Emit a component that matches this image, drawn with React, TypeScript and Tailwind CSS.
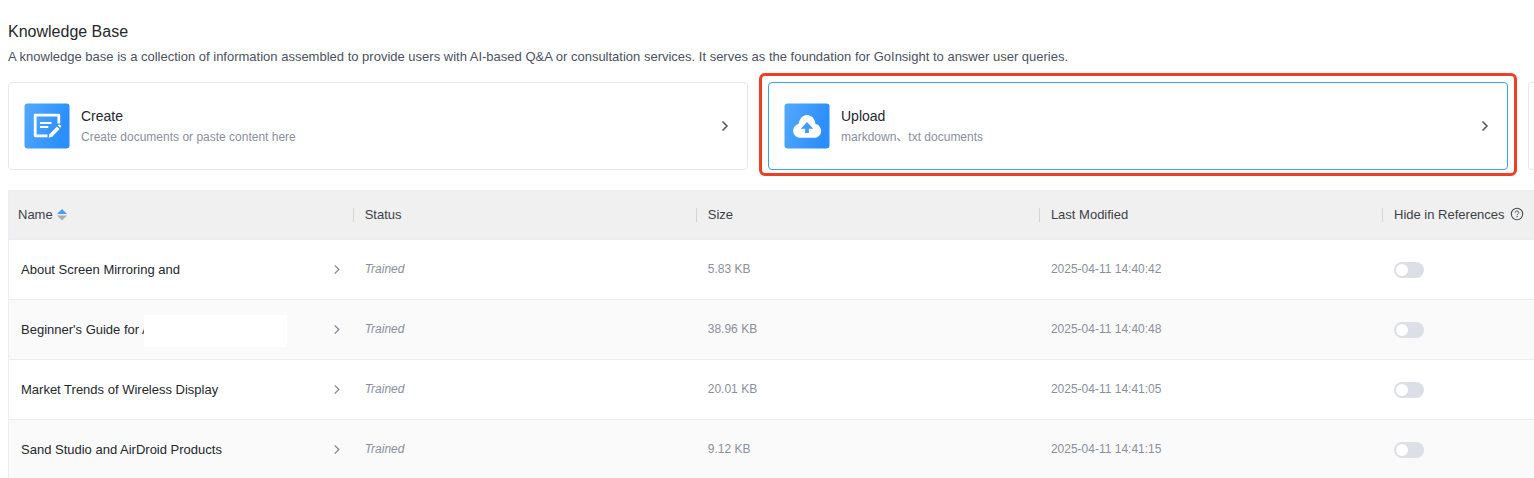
import { useState, type ReactNode } from "react";

interface KnowledgeDoc {
  name: string;
  redacted?: boolean;
  status: string;
  size: string;
  modified: string;
}

const docs: KnowledgeDoc[] = [
  { name: "About Screen Mirroring and", status: "Trained", size: "5.83 KB", modified: "2025-04-11 14:40:42" },
  { name: "Beginner's Guide for A", redacted: true, status: "Trained", size: "38.96 KB", modified: "2025-04-11 14:40:48" },
  { name: "Market Trends of Wireless Display", status: "Trained", size: "20.01 KB", modified: "2025-04-11 14:41:05" },
  { name: "Sand Studio and AirDroid Products", status: "Trained", size: "9.12 KB", modified: "2025-04-11 14:41:15" },
];

function ChevronIcon({ className }: { className: string }) {
  return (
    <svg viewBox="0 0 8 12" fill="none" stroke="currentColor" aria-hidden="true" className={className}>
      <path d="M1.5 1.5 6 6 1.5 10.5" strokeWidth="1.5" />
    </svg>
  );
}

function CreateIcon() {
  return (
    <svg viewBox="0 0 46 46" className="size-[46px] shrink-0" aria-hidden="true">
      <defs>
        <linearGradient id="create-bg" x1="0" y1="0" x2="1" y2="0.3">
          <stop offset="0" stopColor="#54a9ff" />
          <stop offset="1" stopColor="#2a8efc" />
        </linearGradient>
      </defs>
      <rect x="0.5" y="0.5" width="45" height="45" rx="3" fill="url(#create-bg)" />
      <path d="M34.8 20.5V12.2H11.2v20.6h12.3" fill="none" stroke="#fff" strokeWidth="2.8" strokeLinejoin="round" />
      <path d="M16 19.9h11.5M16 23.9h8.3" fill="none" stroke="#fff" strokeWidth="2" />
      <path d="m33 23.4 2.6 2.5-7.4 7.8-3.5 1 .7-3.5z" fill="#fff" />
      <path d="m33.8 22.5 1-1c.8-.5 2.9 1.2 2.3 2.3l-.9 1z" fill="#fff" />
    </svg>
  );
}

function UploadIcon() {
  return (
    <svg viewBox="0 0 46 46" className="size-[46px] shrink-0" aria-hidden="true">
      <defs>
        <linearGradient id="upload-bg" x1="0" y1="0" x2="1" y2="0.3">
          <stop offset="0" stopColor="#54a9ff" />
          <stop offset="1" stopColor="#2a8efc" />
        </linearGradient>
      </defs>
      <rect x="0.5" y="0.5" width="45" height="45" rx="3" fill="url(#upload-bg)" />
      <path
        d="M16.5 34.8C12.4 34.8 9.2 31.9 9.2 28c0-3.5 2.3-6.2 5.4-6.9C15.3 15.8 18.700 12 23 12c4.400 0 7.900 3.600 8.500 8.900 3.300.6 5.600 3.500 5.600 7 0 4-3.100 6.900-7.200 6.900z"
        fill="#fff"
      />
      <path d="m23 19 6.200 6.700h-4.300v4.200h-3.800v-4.200h-4.300z" fill="#3f9cfe" />
    </svg>
  );
}

function HelpIcon() {
  return (
    <svg viewBox="0 0 14 14" fill="none" stroke="#4b4d52" className="mb-[2px] size-[14px]" aria-hidden="true">
      <circle cx="7" cy="7" r="5.7" strokeWidth="1.1" />
      <path d="M5.200 5.700C5.200 4.500 6 3.900 7 3.900s1.800.7 1.800 1.600c0 1.200-1.700 1.300-1.700 2.600" strokeWidth="1" />
      <path d="M7.100 9.100v1.200" strokeWidth="1.1" />
    </svg>
  );
}

interface ActionCardProps {
  icon: ReactNode;
  title: string;
  description: string;
  active?: boolean;
}

function ActionCard({ icon, title, description, active }: ActionCardProps) {
  return (
    <button
      type="button"
      className={`flex h-[88px] w-full items-center rounded border bg-white pl-[15px] pr-[18px] text-left ${
        active ? "border-[#409eff]" : "border-[#e6e8eb]"
      }`}
    >
      {icon}
      <span className="ml-[11px] flex min-w-0 flex-1 flex-col">
        <span className="text-[14px] leading-[22px] text-[#25272d]">{title}</span>
        <span className="text-[12px] leading-[20px] text-[#8a8f9d]">{description}</span>
      </span>
      <ChevronIcon className="h-3 w-2 text-[#4f5566]" />
    </button>
  );
}

function HeaderCell({ children }: { children: ReactNode }) {
  return (
    <th scope="col" className="border-b border-[#ebeef5] p-0 font-normal">
      <div className="flex items-center">
        <span className="-ml-px mr-[11px] h-[14px] w-px bg-[#d3d5d9]" />
        {children}
      </div>
    </th>
  );
}

function DocRow({ doc }: { doc: KnowledgeDoc }) {
  const [hidden, setHidden] = useState(false);

  return (
    <tr className="h-[60px] text-[12px] text-[#8a8f9d] even:bg-[#fafafa]">
      <td className="border-b border-[#ebeef5] p-0 pl-3 pr-[13px]">
        <a href="#" className="flex items-center justify-between text-[13px] leading-5 text-[#25272d]">
          <span className="relative whitespace-nowrap">
            {doc.name}
            {doc.redacted && <span className="absolute -top-[5px] left-[123px] h-8 w-[143px] bg-white" />}
          </span>
          <ChevronIcon className="h-[11px] w-2 text-[#858b99]" />
        </a>
      </td>
      <td className="border-b border-[#ebeef5] p-0 pb-[2px] pl-[11px] italic">{doc.status}</td>
      <td className="border-b border-[#ebeef5] p-0 pb-[2px] pl-[11px]">{doc.size}</td>
      <td className="border-b border-[#ebeef5] p-0 pb-[2px] pl-[11px]">{doc.modified}</td>
      <td className="border-b border-[#ebeef5] p-0 pl-[11px]">
        <input
          type="checkbox"
          role="switch"
          aria-label={`Hide ${doc.name} in references`}
          checked={hidden}
          onChange={(e) => setHidden(e.target.checked)}
          className="flex h-4 w-[30px] cursor-pointer appearance-none items-center rounded-full bg-[#dcdfe6] px-[2px] before:size-3 before:rounded-full before:bg-white checked:justify-end checked:bg-[#409eff]"
        />
      </td>
    </tr>
  );
}

export default function App() {
  return (
    <main className="h-screen overflow-hidden bg-white pl-2 pt-5 font-['Liberation_Sans','Noto_Sans_CJK_SC',sans-serif]">
      <h1 className="text-[16px] leading-6 text-[#25272d]">Knowledge Base</h1>
      <p className="mt-[3px] text-[13px] leading-5 text-[#4b5162]">
        A knowledge base is a collection of information assembled to provide users with AI-based Q&amp;A or consultation
        services. It serves as the foundation for GoInsight to answer user queries.
      </p>

      {/* Ways to add documents, the third card is cut off by the window */}
      <div className="mt-[15px] grid grid-cols-[1fr_1fr_6px] gap-5">
        <ActionCard icon={<CreateIcon />} title="Create" description="Create documents or paste content here" />
        <div className="relative">
          <ActionCard icon={<UploadIcon />} title="Upload" description="markdown、txt documents" active />
          <div className="pointer-events-none absolute -inset-x-[9px] -bottom-[6px] -top-[9px] rounded-md border-3 border-[#ee3f24]" />
        </div>
        <div className="rounded-l border border-r-0 border-[#e6e8eb]" />
      </div>

      {/* Documents */}
      <div className="mt-5 border-l border-t border-[#ebeef5]">
        <table className="w-full table-fixed border-separate border-spacing-0 text-left">
          <colgroup>
            <col className="w-[22.6%]" />
            <col className="w-[22.5%]" />
            <col className="w-[22.5%]" />
            <col className="w-[22.5%]" />
            <col />
          </colgroup>
          <thead>
            <tr className="h-[49px] bg-[#f0f0f0] text-[13px] text-[#3c3f47]">
              <th scope="col" className="border-b border-[#ebeef5] p-0 pl-[9px] font-normal">
                <button type="button" className="flex items-center gap-[3px]">
                  Name
                  <svg viewBox="0 0 12 12" className="size-3" aria-hidden="true">
                    <path d="M6 0 11 5H1z" fill="#409eff" />
                    <path d="M6 11.500 1 6.500h10z" fill="#a8abb2" />
                  </svg>
                </button>
              </th>
              <HeaderCell>Status</HeaderCell>
              <HeaderCell>Size</HeaderCell>
              <HeaderCell>Last Modified</HeaderCell>
              <HeaderCell>
                <span className="mr-[5px] whitespace-nowrap">Hide in References</span>
                <HelpIcon />
              </HeaderCell>
            </tr>
          </thead>
          <tbody>
            {docs.map((doc) => (
              <DocRow key={doc.name} doc={doc} />
            ))}
          </tbody>
        </table>
      </div>
    </main>
  );
}
